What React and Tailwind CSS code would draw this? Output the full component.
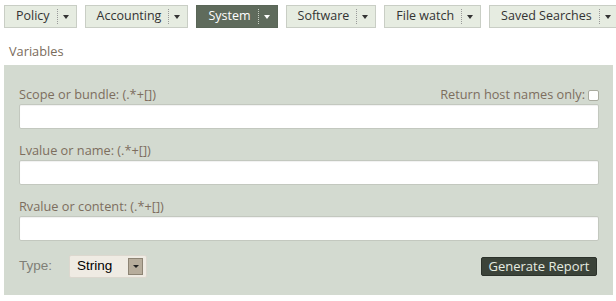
const menus = [
  { label: "Policy" },
  { label: "Accounting" },
  { label: "System", active: true },
  { label: "Software" },
  { label: "File watch" },
  { label: "Saved Searches" },
];

const fields = [
  "Scope or bundle: (.*+[])",
  "Lvalue or name: (.*+[])",
  "Rvalue or content: (.*+[])",
];

function MenuButton({ label, active }) {
  return (
    <div
      className={
        "flex h-[23px] shrink-0 items-center whitespace-nowrap border pl-[11px] pr-[7px] text-[12.5px] " +
        (active
          ? "border-[#5a6657] bg-[#5f6b5c] text-white"
          : "border-[#c9cec5] bg-[#e6ece1] text-[#333]")
      }
    >
      <span>{label}</span>
      <span
        className={
          "ml-[7px] h-[15px] border-l border-dotted " +
          (active ? "border-[#c8d0c4]" : "border-[#999]")
        }
      />
      <svg width="6" height="4" viewBox="0 0 6 4" className="ml-[5px]">
        <path d="M0 0h6L3 4z" fill={active ? "#fff" : "#333"} />
      </svg>
    </div>
  );
}

export default function App() {
  return (
    <div
      className="h-[301px] w-[616px] bg-white"
      style={{ fontFamily: '"Open Sans", sans-serif' }}
    >
      <nav className="flex gap-[8px] pl-[4px] pt-[5px]">
        {menus.map((m) => (
          <MenuButton key={m.label} {...m} />
        ))}
      </nav>

      <h2 className="ml-[9px] mt-[14px] text-[12.75px] leading-[18px] text-[#7a6c5c]">
        Variables
      </h2>

      <section className="ml-[4px] mt-[5px] w-[609px] bg-[#d3dad0] pb-[17px] pl-[15px] pr-[14px] pt-[21px]">
        {fields.map((f, i) => (
          <div key={f} className="mb-[13px]">
            <div className="flex h-[18px] items-center justify-between text-[12.75px] text-[#7d6e5e]">
              <span>{f}</span>
              {i === 0 && (
                <span className="flex items-center">
                  Return host names only:
                  <span className="ml-[3px] inline-block h-[11px] w-[11px] rounded-[2px] border border-[#a9ab9f] bg-white" />
                </span>
              )}
            </div>
            <input
              type="text"
              className="block h-[25px] w-full rounded-[2px] border border-[#c3c8bf] bg-white shadow-[inset_0_1px_1px_rgba(0,0,0,0.06)] outline-none"
            />
          </div>
        ))}

        <div className="mt-[14px] flex items-center justify-between">
          <div
            className="flex items-center text-[13.5px]"
            style={{ fontFamily: '"Liberation Sans", Arial, sans-serif' }}
          >
            <span className="w-[50px] text-[#7f7f77]">Type:</span>
            <div className="flex h-[23px] w-[78px] items-center justify-between rounded-[2px] border border-[#dcd8cf] bg-[#efebe3] pl-[7px] pr-[3px] text-black">
              <span>String</span>
              <span className="flex h-[17px] w-[15px] items-center justify-center border border-[#8d8474] bg-[#b7ad9c]">
                <svg width="6" height="3" viewBox="0 0 6 3">
                  <path d="M0 0h6L3 3z" fill="#222" />
                </svg>
              </span>
            </div>
          </div>
          <button className="mr-[2px] h-[19px] w-[116px] rounded-[2px] border border-[#2c322b] bg-[#3b4339] text-[13px] leading-none text-[#e6ece1]">
            Generate Report
          </button>
        </div>
      </section>
    </div>
  );
}
